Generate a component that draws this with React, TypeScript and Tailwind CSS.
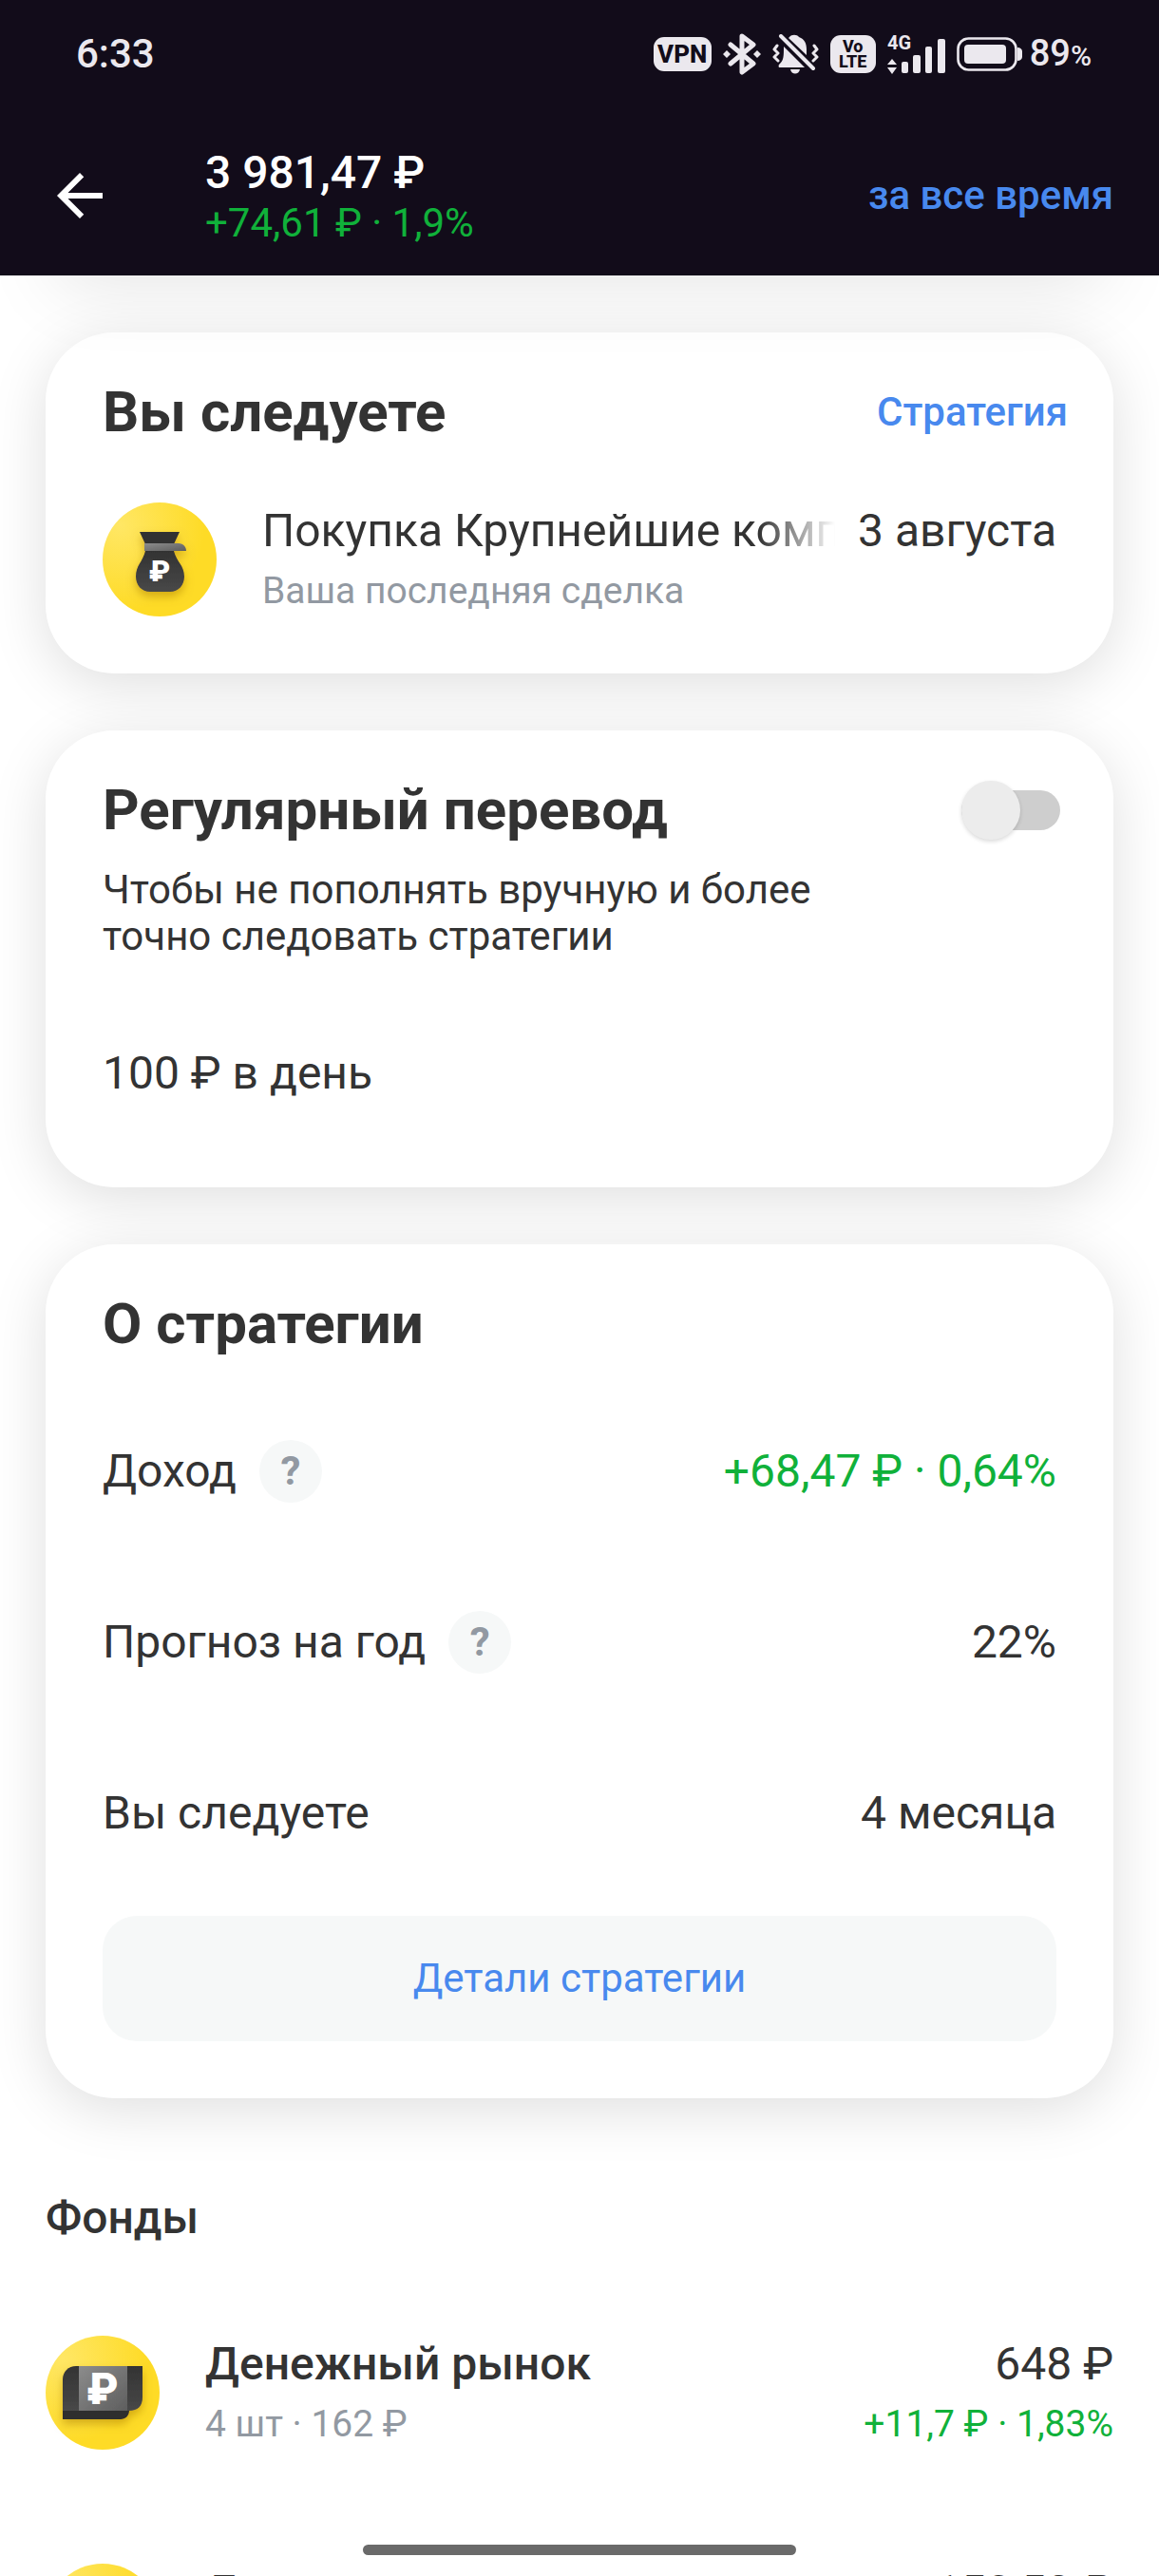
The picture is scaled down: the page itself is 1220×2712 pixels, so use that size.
import { useState, type ReactNode } from 'react';

interface Fund {
  name: string;
  holding: string;
  value: string;
  profit: string;
}

const FUNDS: Fund[] = [
  { name: 'Денежный рынок', holding: '4 шт · 162 ₽', value: '648 ₽', profit: '+11,7 ₽ · 1,83%' },
  { name: 'Долговые активы', holding: '1 шт · 150 ₽', value: '150,53 ₽', profit: '+6,58 ₽ · 4,38%' },
];

function BluetoothIcon() {
  return (
    <svg width="40" height="44" viewBox="0 0 40 44" fill="none" aria-hidden="true">
      <path
        d="M8 12 32 32 20 41V3l12 9L8 32"
        stroke="#ebe8ee"
        strokeWidth="5"
        strokeLinejoin="round"
        strokeLinecap="round"
      />
      <path d="m4 18 4 4-4 4-4-4zM36 18l4 4-4 4-4-4z" fill="#ebe8ee" />
    </svg>
  );
}

function BellOffIcon() {
  return (
    <svg width="49" height="42" viewBox="0 0 49 42" fill="none" aria-hidden="true">
      <path d="M18 3c2-3 8-3 10 0 6 2 8 7 8 13v6L17 4z" fill="#ebe8ee" />
      <path d="M12 13 34 35H7c-1-2 0-3 1-4 4-4 4-8 4-18zM19 37h10c-1 6-9 6-10 0z" fill="#ebe8ee" />
      <path d="M9 2 43 36" stroke="#ebe8ee" strokeWidth="4" strokeLinecap="round" />
      <path
        d="m5 12-3 4 4 4-4 4 4 4M44 12l3 4-4 4 4 4-4 4"
        stroke="#ebe8ee"
        strokeWidth="3"
        strokeLinecap="round"
        strokeLinejoin="round"
      />
    </svg>
  );
}

function SignalIcon() {
  return (
    <svg width="61" height="52" viewBox="0 -6 61 52" fill="#ebe8ee" aria-hidden="true">
      <text x="0" y="15" fontSize="20" fontWeight="700" fontFamily="Roboto, sans-serif">
        4G
      </text>
      <path d="m5 25 5 6H0zM0 34h10l-5 7z" />
      <rect x="15" y="28" width="7" height="12" rx="2" />
      <rect x="27" y="21" width="8" height="19" rx="2" />
      <rect x="40" y="12" width="7" height="28" rx="2" />
      <rect x="53" y="4" width="8" height="36" rx="2" />
    </svg>
  );
}

function BatteryIcon() {
  return (
    <svg width="69" height="36" viewBox="0 0 69 36" aria-hidden="true">
      <rect x="1.5" y="1.5" width="61" height="33" rx="11" fill="none" stroke="#ebe8ee" strokeWidth="2.6" />
      <rect x="8" y="8" width="44" height="20" rx="4" fill="#ebe8ee" />
      <path d="M64 11c3 0 5 2 5 4v6c0 2-2 4-5 4z" fill="#ebe8ee" />
    </svg>
  );
}

function StatusBar() {
  return (
    <div className="flex h-[122px] items-center justify-between pr-[71px] pb-2 pl-20 text-[#ebe8ee]">
      <span className="text-[42px] leading-[50px] font-medium">6:33</span>
      <div className="flex items-center gap-3">
        <span className="flex h-9 w-[61px] items-center justify-center rounded-[11px] bg-[#ebe8ee] text-[26px] leading-none font-extrabold text-[#120c1a]">
          VPN
        </span>
        <BluetoothIcon />
        <BellOffIcon />
        <span className="flex h-10 w-12 flex-col items-center justify-center rounded-[11px] bg-[#ebe8ee] text-[18px] leading-[16px] font-extrabold text-[#120c1a]">
          <span>Vo</span>
          <span>LTE</span>
        </span>
        <SignalIcon />
        <BatteryIcon />
        <span className="-ml-1 text-[38px] leading-[50px] font-medium">
          89<span className="text-[30px]">%</span>
        </span>
      </div>
    </div>
  );
}

function YellowDisc({ id, children }: { id: string; children: ReactNode }) {
  return (
    <svg className="size-[120px] shrink-0" viewBox="0 0 120 120" aria-hidden="true">
      <defs>
        <radialGradient id={`${id}-disc`} cx="0.15" cy="0.2" r="0.75">
          <stop offset="0" stopColor="#ffe765" />
          <stop offset="1" stopColor="#fedb26" />
        </radialGradient>
        <linearGradient id={`${id}-dark`} x1="0" y1="0" x2="0" y2="1">
          <stop offset="0" stopColor="#333333" />
          <stop offset="1" stopColor="#484848" />
        </linearGradient>
        <linearGradient id={`${id}-grey`} x1="0" y1="0" x2="1" y2="1">
          <stop offset="0" stopColor="#8c8c8c" />
          <stop offset="1" stopColor="#5e5e5e" />
        </linearGradient>
        <filter id={`${id}-blur`} x="-30%" y="-30%" width="160%" height="160%">
          <feDropShadow dx="0" dy="5" stdDeviation="5" floodColor="#a87900" floodOpacity="0.5" />
        </filter>
      </defs>
      <circle cx="60" cy="60" r="60" fill={`url(#${id}-disc)`} />
      {children}
    </svg>
  );
}

function BagIcon() {
  return (
    <YellowDisc id="bag">
      <g filter="url(#bag-blur)">
        <path d="M39 31h42l-6 13H45z" fill="#333333" />
        <path
          d="M45 51h30c3 12 11 15 11 27 0 9-6 16-15 16H50c-9 0-15-7-15-16 0-12 7-15 10-27z"
          fill="url(#bag-dark)"
        />
        <path d="M44 43h36c5 0 8 4 8 8H44z" fill="url(#bag-grey)" />
      </g>
      <text x="60" y="83" textAnchor="middle" fontSize="31" fontWeight="900" fontFamily="Roboto, sans-serif" fill="#fff">
        ₽
      </text>
    </YellowDisc>
  );
}

function BanknoteIcon({ id }: { id: string }) {
  return (
    <YellowDisc id={id}>
      <g filter={`url(#${id}-blur)`}>
        <path d="M18 79h70c0 5-4 9-9 9H18z" fill="#2d2d2d" />
        <path d="M18 46c0-8 6-14 14-14h70v33c0 9-5 14-14 14H18z" fill={`url(#${id}-dark)`} />
        <path d="M35 32h51v47H35z" fill={`url(#${id}-grey)`} />
      </g>
      <text x="60" y="72" textAnchor="middle" fontSize="46" fontWeight="900" fontFamily="Roboto, sans-serif" fill="#fff">
        ₽
      </text>
    </YellowDisc>
  );
}

function Card({ children }: { children: ReactNode }) {
  return (
    <section className="rounded-[72px] bg-white px-15 pt-12 shadow-[0_12px_60px_rgba(0,0,0,0.13)]">
      {children}
    </section>
  );
}

function CardTitle({ children }: { children: ReactNode }) {
  return <h2 className="text-[60px] leading-[71px] font-bold">{children}</h2>;
}

function InfoRow({ label, hint, children }: { label: string; hint?: boolean; children: ReactNode }) {
  return (
    <div className="flex h-[180px] items-center justify-between text-[48px] leading-[60px]">
      <dt className="flex items-center gap-6">
        {label}
        {hint && (
          <button
            type="button"
            aria-label={`${label}: подсказка`}
            className="size-[66px] rounded-full bg-[#f6f8f8] text-[42px] leading-[66px] font-bold text-[#9299a2]"
          >
            ?
          </button>
        )}
      </dt>
      <dd>{children}</dd>
    </div>
  );
}

function FundRow({ fund, id }: { fund: Fund; id: string }) {
  return (
    <li className="flex h-[240px] items-center gap-12">
      <BanknoteIcon id={id} />
      <div className="flex flex-1 flex-col gap-1.5">
        <span className="text-[48px] leading-[60px] font-medium">{fund.name}</span>
        <span className="text-[39px] leading-[54px] text-[#9299a2]">{fund.holding}</span>
      </div>
      <div className="flex flex-col gap-1.5 text-right">
        <span className="text-[48px] leading-[60px]">{fund.value}</span>
        <span className="text-[39px] leading-[54px] text-[#10b13a]">{fund.profit}</span>
      </div>
    </li>
  );
}

export default function App() {
  const [regular, setRegular] = useState(false);

  return (
    <div className="relative flex h-screen flex-col overflow-hidden bg-white font-[Roboto,sans-serif] text-[#333333]">
      <header className="relative z-10 shrink-0 bg-[#120c1a] shadow-[0_72px_80px_-60px_rgba(0,0,0,0.1)]">
        <StatusBar />
        <div className="flex h-[168px] items-center px-12">
          <button type="button" aria-label="Назад" className="mr-24 size-[72px]">
            <svg viewBox="0 0 24 24" fill="#fff" aria-hidden="true">
              <path d="M20 11H7.83l5.59-5.59L12 4l-8 8 8 8 1.41-1.41L7.83 13H20v-2z" />
            </svg>
          </button>
          <div className="flex-1 pt-0.5">
            <h1 className="text-[48px] leading-[56px] font-medium text-white">3 981,47 ₽</h1>
            <p className="text-[42px] leading-[50px] text-[#10b13a]">+74,61 ₽ · 1,9%</p>
          </div>
          <button type="button" className="text-[42px] leading-[50px] font-medium text-[#4889ee]">
            за все время
          </button>
        </div>
      </header>

      <main className="flex-1 overflow-y-auto px-12 pt-15 [scrollbar-width:none]">
        <div className="flex flex-col gap-15">
          <Card>
            <div className="flex items-center justify-between">
              <CardTitle>Вы следуете</CardTitle>
              <a href="#strategy" className="-mr-3 text-[42px] leading-[50px] font-medium text-[#4889ee]">
                Стратегия
              </a>
            </div>
            <div className="flex items-center py-15">
              <BagIcon />
              <div className="ml-12 flex min-w-0 flex-1 flex-col gap-1.5">
                <div className="flex gap-6 text-[48px] leading-[60px]">
                  <span className="min-w-0 flex-1 overflow-hidden whitespace-nowrap [mask-image:linear-gradient(to_right,black_calc(100%-80px),transparent)]">
                    Покупка Крупнейшие компании
                  </span>
                  <span>3 августа</span>
                </div>
                <span className="text-[39px] leading-[54px] text-[#9299a2]">Ваша последняя сделка</span>
              </div>
            </div>
          </Card>

          <Card>
            <div className="flex items-center justify-between">
              <label htmlFor="regular">
                <CardTitle>Регулярный перевод</CardTitle>
              </label>
              <input
                id="regular"
                type="checkbox"
                role="switch"
                checked={regular}
                onChange={(e) => setRegular(e.target.checked)}
                className="relative -mr-1 h-[42px] w-[104px] appearance-none rounded-full bg-[#cecece] before:absolute before:-top-2.5 before:left-0 before:size-[62px] before:rounded-full before:bg-[#ececec] before:shadow-[0_2px_4px_rgba(0,0,0,0.15)] checked:bg-[#9ec3fb] checked:before:left-[42px] checked:before:bg-[#4889ee]"
              />
            </div>
            <p className="mt-6 max-w-[800px] text-[42px] leading-[49px]">
              Чтобы не пополнять вручную и более точно следовать стратегии
            </p>
            <p className="flex h-[240px] items-center text-[48px] leading-[60px]">100 ₽ в день</p>
          </Card>

          <Card>
            <CardTitle>О стратегии</CardTitle>
            <dl className="mt-[30px]">
              <InfoRow label="Доход" hint>
                <span className="text-[#10b13a]">+68,47 ₽ · 0,64%</span>
              </InfoRow>
              <InfoRow label="Прогноз на год" hint>
                22%
              </InfoRow>
              <InfoRow label="Вы следуете">4 месяца</InfoRow>
            </dl>
            <button
              type="button"
              className="mt-[18px] mb-15 h-[132px] w-full rounded-[36px] bg-[#f6f8f8] text-[42px] leading-[50px] text-[#4889ee]"
            >
              Детали стратегии
            </button>
          </Card>
        </div>

        <h2 className="mt-[98px] text-[48px] leading-[56px] font-medium">Фонды</h2>
        <ul className="mt-9">
          {FUNDS.map((fund, i) => (
            <FundRow key={fund.name} fund={fund} id={`fund${i}`} />
          ))}
        </ul>
      </main>

      <div className="absolute bottom-[22px] left-1/2 z-20 h-[11px] w-[456px] -translate-x-1/2 rounded-full bg-[#6a6a6a]" />
    </div>
  );
}
